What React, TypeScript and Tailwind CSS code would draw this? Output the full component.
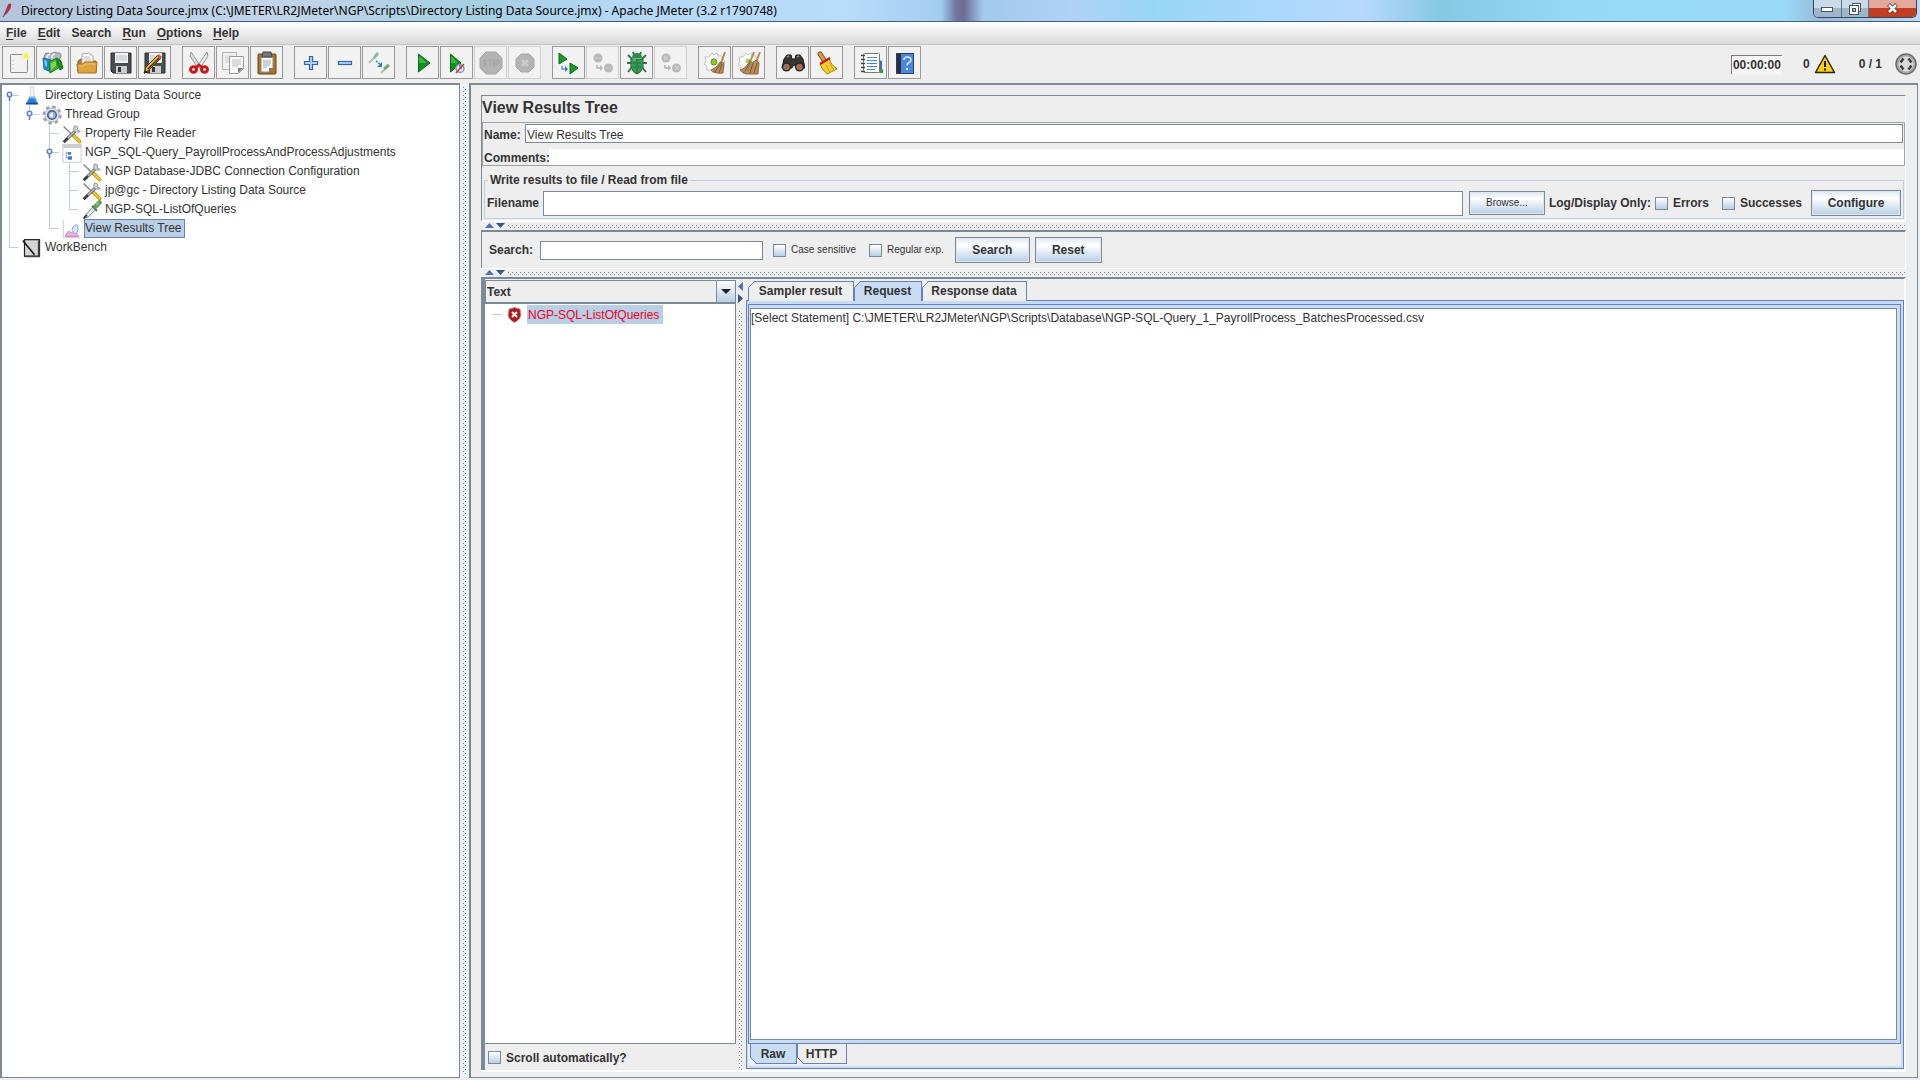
import type { ReactNode } from 'react';

const dotsDark =
  'bg-[conic-gradient(at_1px_1px,transparent_75%,#7a8a99_0),conic-gradient(at_1px_1px,transparent_75%,#7a8a99_0)] bg-[length:4px_4px] bg-[position:0_0,2px_2px]';
const dotsBlue =
  'bg-[conic-gradient(at_1px_1px,transparent_75%,#6382bf_0),conic-gradient(at_1px_1px,transparent_75%,#6382bf_0)] bg-[length:4px_4px] bg-[position:0_0,2px_2px]';

const buttonStyle =
  'border border-[#7a8a99] bg-linear-to-b from-[#dde8f3] via-white via-30% to-[#b8cfe5] outline outline-1 -outline-offset-2 outline-[#dde6ef]';

function Svg({ size = 24, children }: { size?: number; children: ReactNode }) {
  return (
    <svg width={size} height={size} viewBox="0 0 24 24" fill="none" className="shrink-0">
      {children}
    </svg>
  );
}

/* Toolbar icons */

const NewIcon = () => (
  <Svg>
    <rect x="3.500" y="3.500" width="17" height="18" rx="1" fill="#f2f2f2" stroke="#8b8b8b" />
    <path d="M6 9v1M6 13v1M6 17v1" stroke="#aaa" />
    <circle cx="19" cy="5" r="4" fill="#f8f5a8" opacity=".9" />
    <circle cx="19" cy="5" r="2" fill="#f4ee50" />
  </Svg>
);

const TemplatesIcon = () => (
  <Svg>
    <path d="M3 6q1-5 4-4l3 1 3-2 3 1q4-1 4 3l-2 5H4z" fill="#b3bdc0" stroke="#7c868a" />
    <path d="M6 7q0-3 3-4M11 7q0-4 3-4" stroke="#eef1f2" strokeWidth="1.500" />
    <path d="M2 7l8 2v12l-7-3z" fill="#1f86d0" stroke="#1d6aa8" />
    <path d="M3 9l3 1v6l-2-1z" fill="#6fc3f0" />
    <path d="M8 11l8-4 3 3v6l-10 6z" fill="#3fb238" stroke="#1c7a1c" />
    <path d="M16 7l4 3 2 7-3 2-3-6z" fill="#1f8a22" stroke="#1c7a1c" />
    <path d="M10 12l5-2v5l-5 4z" fill="#78d850" />
  </Svg>
);

const OpenIcon = () => (
  <Svg>
    <path d="M3 21V10l3-2h5l2 2h8v11z" fill="#b8792a" stroke="#8a5a1c" />
    <path d="M7 3l7-1 4 3v10H7z" fill="#fafafa" stroke="#aaa" />
    <path d="M9 6h6M9 8h7M9 10h7" stroke="#bdbdbd" />
    <path d="M2 13h6l2-2h12l-1 11H3z" fill="#dda340" stroke="#a8701f" />
    <path d="M4 15h4l2-2h10" stroke="#f5c878" />
  </Svg>
);

const Floppy = () => (
  <>
    <path d="M2 2h20v20H4l-2-2z" fill="#4a4d50" stroke="#2b2d2f" />
    <rect x="6" y="2" width="13" height="10" fill="#f0f3f5" />
    <path d="M7 5h11M7 7h11M7 9h11" stroke="#b7bfc5" />
    <rect x="7" y="15" width="11" height="7" fill="#c9cdd0" />
    <rect x="9" y="16" width="3" height="5" fill="#33363a" />
  </>
);

const SaveIcon = () => <Svg><Floppy /></Svg>;

const SaveAsIcon = () => (
  <Svg>
    <Floppy />
    <path d="M15 4l3 3L6 19l-5 3 2-6z" fill="#f0b32c" stroke="#5a3a10" />
    <path d="M17 6L5 18" stroke="#3a2a18" strokeWidth="1.500" />
    <path d="M14 5l2-2 3 3-2 2z" fill="#c8603a" />
    <path d="M2 19l2 2-3 2z" fill="#222" />
  </Svg>
);

const CutIcon = () => (
  <Svg>
    <path d="M4 1l10 15-3 1L3 5z" fill="#dfe3e6" stroke="#8d9396" />
    <path d="M20 1L10 16l3 1 8-12z" fill="#eef0f1" stroke="#8d9396" />
    <ellipse cx="6.500" cy="18.500" rx="3" ry="2.700" stroke="#cf1515" strokeWidth="3" />
    <ellipse cx="17.500" cy="18.500" rx="3" ry="2.700" stroke="#cf1515" strokeWidth="3" />
    <path d="M9 16l3-2 3 2" stroke="#cf1515" strokeWidth="2.500" />
  </Svg>
);

const CopyIcon = () => (
  <Svg>
    <path d="M1.500 1.500h14v17h-14z" fill="#f1f1f1" stroke="#b0b0b0" />
    <path d="M4 5h8M4 7h8M4 9h4M4 11h4" stroke="#cfcfcf" />
    <path d="M8.500 5.500h14v12l-5 5h-9z" fill="#fafafa" stroke="#9b9b9b" />
    <path d="M11 9h9M11 11h9M11 13h9M11 15h6" stroke="#bcbcbc" />
    <path d="M22 17l-5 5v-5z" fill="#777" />
  </Svg>
);

const PasteIcon = () => (
  <Svg>
    <rect x="3" y="3" width="18" height="20" rx="1" fill="#a87424" stroke="#6d4812" />
    <path d="M6 6h12v11l-4 4H6z" fill="#f8f8f8" stroke="#8c8c8c" />
    <path d="M8 1h8l1 5H7z" fill="#73777a" stroke="#44474a" />
    <path d="M8 10h8M8 12h8M8 14h7M8 16h4" stroke="#aaa" />
    <path d="M18 17l-4 4v-4z" fill="#777" />
  </Svg>
);

const ExpandIcon = () => (
  <Svg>
    <path d="M10.500 5.500h3v5h5v3h-5v5h-3v-5h-5v-3h5z" fill="#b4d2f2" stroke="#2f62b0" strokeWidth="1.200" />
  </Svg>
);

const CollapseIcon = () => (
  <Svg>
    <rect x="5.500" y="10.500" width="13" height="3" fill="#b4d2f2" stroke="#2f62b0" strokeWidth="1.200" />
  </Svg>
);

const ToggleIcon = () => (
  <Svg>
    <path d="M2 12l6-6" stroke="#b5bdb5" strokeWidth="2" />
    <path d="M7 7l4-5" stroke="#8fbb95" strokeWidth="3" />
    <path d="M14 22l5-5" stroke="#b5bdb5" strokeWidth="2" />
    <path d="M17 18l5-4" stroke="#6fa878" strokeWidth="3" />
    <path d="M9 10l5 4" stroke="#2f7de0" strokeWidth="1.500" strokeDasharray="2 1" />
    <path d="M15 11v5h-5z" fill="#2f7de0" />
  </Svg>
);

const StartIcon = () => (
  <Svg>
    <path d="M7.500 3v18L19 12z" fill="#128c1e" stroke="#0b6a14" />
    <path d="M8 5v7h8z" fill="#3fb53f" />
  </Svg>
);

const StartNoTimersIcon = () => (
  <Svg>
    <path d="M5.500 3v18L16 12z" fill="#128c1e" stroke="#0b6a14" />
    <path d="M6 5v7h7z" fill="#3fb53f" />
    <circle cx="15" cy="17.500" r="4" fill="#dfe8f4" stroke="#7d9cc8" strokeWidth="1.500" />
    <path d="M15 17v-3M15 17h2" stroke="#456" />
    <path d="M11 22l8-9" stroke="#d93636" strokeWidth="1.500" />
  </Svg>
);

const StopIcon = () => (
  <Svg>
    <path d="M7 1h10l6 6v10l-6 6H7l-6-6V7z" fill="#b4b4b4" stroke="#a6a6a6" />
    <path d="M4 9h3l-2 3h2l-1 3H4M9 9h4M11 9v6M14 9h2v6h-2zM18 15V9h2v3h-2" stroke="#a0a0a0" />
  </Svg>
);

const ShutdownIcon = () => (
  <Svg>
    <path d="M8 3h8l5 5v8l-5 5H8l-5-5V8z" fill="#b4b4b4" stroke="#a6a6a6" />
    <path d="M9 9l6 6M15 9l-6 6" stroke="#cdcdcd" strokeWidth="2.500" />
  </Svg>
);

const RemoteStartIcon = () => (
  <Svg>
    <path d="M2 2v11l8-5zM13 12v11l8-6z" fill="#1d9a2a" stroke="#0b6a14" />
    <path d="M5 15v3h4" stroke="#5a9ad8" strokeWidth="1.500" />
    <path d="M8 15l3 3-3 3z" fill="#4279b8" />
  </Svg>
);

const RemoteStopIcon = ({ mark }: { mark: string }) => (
  <Svg>
    <circle cx="7" cy="7" r="4.500" fill="#b8b8b8" />
    <circle cx="17.500" cy="17" r="4.500" fill="#b8b8b8" />
    <path d={mark} stroke="#d0d0d0" strokeWidth="1.200" />
    <path d="M6 14v3h4" stroke="#b4b4b4" strokeWidth="1.500" />
    <path d="M9 14l3 3-3 3z" fill="#b4b4b4" />
  </Svg>
);

const BugIcon = () => (
  <Svg>
    <path d="M3 4l4 4M21 4l-4 4M2 12h5M22 12h-5M3 21l4-5M21 21l-4-5M9 4L8 1M15 4l1-3" stroke="#2f7a45" strokeWidth="2" />
    <path d="M7 7q0-5 5-5t5 5z" fill="#2f8a4a" />
    <path d="M6 8h12v8q-2 6-6 7q-4-1-6-7z" fill="#3c9a57" stroke="#23693a" />
    <path d="M12 8v15M8 12h3M8 16h3M13 12h3M13 16h3" stroke="#23693a" />
    <path d="M8 9h3" stroke="#7cc891" />
  </Svg>
);

const gear = 'M9 2l2 2 3-2 1 3 4 0 0 3 3 2-2 3 1 3-3 1-1 4-4-1-3 2-2-3-4 0 0-4-3-2 2-3-1-4 4 0z';

const ClearIcon = () => (
  <Svg>
    <path d={gear} fill="#fbfbfb" stroke="#c4c4c4" />
    <circle cx="11" cy="11" r="3" fill="#8fc832" stroke="#5f9a1c" />
    <path d="M22 1L18 12" stroke="#b98d4b" strokeWidth="2" />
    <path d="M17 11l4 1-1 10q-8 1-12-3q6-2 9-8z" fill="#b68c5a" stroke="#8f6a40" />
    <path d="M18 12l-6 9M19 13l-3 9" stroke="#7d5a34" />
  </Svg>
);

const ClearAllIcon = () => (
  <Svg>
    <path d={gear} fill="#fbfbfb" stroke="#c4c4c4" />
    <circle cx="11" cy="10" r="2.500" fill="#a9cf6a" />
    <path d="M17 1l-4 10M23 1l-4 10" stroke="#b98d4b" strokeWidth="2" />
    <path d="M13 9l2 3 4-3 3 3-1 11H9q-4-1-6-4q7-2 10-10z" fill="#b68c5a" stroke="#8f6a40" />
    <path d="M13 12l-5 8M16 12l-3 10M20 12l-3 10" stroke="#7d5a34" />
  </Svg>
);

const SearchIcon = () => (
  <Svg>
    <path d="M3 8l3-4h4l1 4h3l1-4h4l3 4 2 9h-9l-2-4-2 4H1z" fill="#3a3431" stroke="#1b1817" />
    <path d="M6 6l2-1M16 6l2-1" stroke="#9b958f" strokeWidth="1.500" />
    <circle cx="5.500" cy="16" r="4.500" fill="#2b2523" />
    <circle cx="18.500" cy="16" r="4.500" fill="#2b2523" />
    <circle cx="5.500" cy="16" r="2.800" fill="#b5633a" stroke="#7f8287" />
    <circle cx="18.500" cy="16" r="2.800" fill="#b5633a" stroke="#7f8287" />
  </Svg>
);

const BroomIcon = () => (
  <Svg>
    <path d="M5 3l4 6" stroke="#9a5a1c" strokeWidth="5" strokeLinecap="round" />
    <path d="M5 3l4 6" stroke="#d69a52" strokeWidth="3" strokeLinecap="round" />
    <path d="M14 8q2 6 8 10l-10 5q-5-4-7-10z" fill="#f5cf2b" stroke="#a8820f" />
    <path d="M11 14l4 7M14 12l5 7" stroke="#c79a14" />
    <path d="M5 13l10-6" stroke="#c01c1c" strokeWidth="2.500" />
  </Svg>
);

const FunctionHelperIcon = () => (
  <Svg>
    <path d="M20 9l3 1v10l-3 1z" fill="#3a70c4" />
    <path d="M20 18h4v4h-4z" fill="#2d9c3c" />
    <rect x="4.500" y="2.500" width="16" height="19" rx="1" fill="#fff" stroke="#777" />
    <path d="M8 6.500h10M8 9.500h10M8 12.500h10M8 15.500h10M8 18.500h8" stroke="#3f86d6" strokeWidth="1.200" />
    <path d="M2 4.500h4M2 8.500h4M2 12.500h4M2 16.500h4M2 20.500h4" stroke="#444" strokeWidth="1.500" />
  </Svg>
);

const HelpIcon = () => (
  <Svg>
    <rect x="3.500" y="2.500" width="17" height="20" fill="#4a86dc" stroke="#2b3b66" />
    <rect x="4" y="3" width="4" height="19" fill="#2b2f3c" />
    <path d="M11 9q0-3 3.500-3t3.500 3q0 1.500-2 2.500t-2 3" stroke="#dfeafa" strokeWidth="1.500" />
    <path d="M14 17v2" stroke="#dfeafa" strokeWidth="2" />
  </Svg>
);

/* Tree icons */

const FlaskIcon = () => (
  <Svg size={20}>
    <path d="M10 1h4l1 10 5 11H4l6-11z" fill="#eef4f9" stroke="#c0cad2" strokeWidth=".700" />
    <path d="M9 13h6l4 9H5z" fill="#2f7fd8" />
    <path d="M9 13h6l1 2H8z" fill="#7fbaf0" />
    <path d="M5 21h14" stroke="#0f4f9a" strokeWidth="2" />
  </Svg>
);

const ThreadGroupIcon = () => (
  <Svg size={20}>
    <circle cx="12" cy="12" r="10" stroke="#9aa1a9" strokeWidth="3" strokeDasharray="4.200 3.650" />
    <circle cx="12" cy="12" r="8.500" fill="#e2e5e9" stroke="#a0a6ad" />
    <circle cx="12" cy="12" r="5.200" fill="#9fb3e0" stroke="#4a5c92" strokeWidth="1.800" />
    <path d="M9 12q1-3 4-3v6q-3 0-4-3z" fill="#f3f6fd" />
  </Svg>
);

const ConfigIcon = () => (
  <Svg size={20}>
    <path d="M2 3l12 12" stroke="#8a8f8f" strokeWidth="2" />
    <path d="M14 14l7 7" stroke="#b08a10" strokeWidth="4.500" strokeLinecap="round" />
    <path d="M14 14l7 7" stroke="#eac32e" strokeWidth="3" strokeLinecap="round" />
    <path d="M2 22L16 8" stroke="#3a3d3f" strokeWidth="3.500" />
    <path d="M7 17l9-9" stroke="#b9bdbf" strokeWidth="2" />
    <path d="M15 2q-2 4 0 7 4 2 7 0l-4-2 1-3z" fill="#d3d6d7" stroke="#85898b" />
  </Svg>
);

const ControllerIcon = () => (
  <Svg size={20}>
    <rect x="1" y="2" width="22" height="21" fill="#fdfdfd" stroke="#c5c5c5" />
    <rect x="1" y="1" width="22" height="5" fill="#cfcfcf" />
    <path d="M5 10v9M5 12h4M5 17h4" stroke="#7a9ad0" />
    <rect x="7" y="11" width="4" height="3" fill="#3d74c8" />
    <rect x="7" y="16" width="5" height="4" fill="#3d74c8" />
  </Svg>
);

const SamplerIcon = () => (
  <Svg size={20}>
    <path d="M2 22l3-5L14 8l3 3-9 9z" fill="#e8ecec" stroke="#5c6262" />
    <path d="M2 22l4-4" stroke="#333" strokeWidth="2" />
    <path d="M12 7l6 6" stroke="#4a5a4a" strokeWidth="2" />
    <path d="M16 8l5-5" stroke="#5c9a55" strokeWidth="5.500" strokeLinecap="round" />
    <path d="M17 6l3-3" stroke="#9ed08f" strokeWidth="1.500" />
  </Svg>
);

const ListenerIcon = () => (
  <Svg size={20}>
    <path d="M1.500 1v21.500H22" stroke="#c0c0cc" />
    <path d="M4 21q2-7 5-6 3 3 5-2l6 8z" fill="#f4a8e0" stroke="#d070bc" />
    <path d="M12 14q0-5 4-7t3 6-6 2" fill="#cfe6f8" stroke="#7aa4d8" />
  </Svg>
);

const WorkBenchIcon = () => (
  <Svg size={20}>
    <rect x="3" y="2" width="18" height="20" fill="#d8dadb" stroke="#222" strokeWidth="1.500" />
    <path d="M7 6h11M7 10h11M7 14h11M7 18h11" stroke="#c5c9cb" />
    <path d="M1 3l14 17" stroke="#1a1a1a" strokeWidth="2" />
    <path d="M20 3v19H4" stroke="#444" strokeWidth="2" />
  </Svg>
);

const ShieldIcon = () => (
  <svg width="15" height="16" viewBox="0 0 15 16" fill="none">
    <path d="M2 2l5.500-1.500L13 2l1 6q-1 5-6.500 7.500Q2 13 1 8z" fill="#b5161b" stroke="#a5a5a5" />
    <path d="M5 5l5 5M10 5l-5 5" stroke="#fff" strokeWidth="2" />
  </svg>
);

const toolGroups: { label: string; icon: ReactNode; disabled?: boolean }[][] = [
  [
    { label: 'New', icon: <NewIcon /> },
    { label: 'Templates', icon: <TemplatesIcon /> },
    { label: 'Open', icon: <OpenIcon /> },
    { label: 'Save', icon: <SaveIcon /> },
    { label: 'Save as', icon: <SaveAsIcon /> },
  ],
  [
    { label: 'Cut', icon: <CutIcon /> },
    { label: 'Copy', icon: <CopyIcon /> },
    { label: 'Paste', icon: <PasteIcon /> },
  ],
  [
    { label: 'Expand all', icon: <ExpandIcon /> },
    { label: 'Collapse all', icon: <CollapseIcon /> },
    { label: 'Toggle', icon: <ToggleIcon /> },
  ],
  [
    { label: 'Start', icon: <StartIcon /> },
    { label: 'Start no pauses', icon: <StartNoTimersIcon /> },
    { label: 'Stop', icon: <StopIcon />, disabled: true },
    { label: 'Shutdown', icon: <ShutdownIcon />, disabled: true },
  ],
  [
    { label: 'Remote start all', icon: <RemoteStartIcon /> },
    { label: 'Remote stop all', icon: <RemoteStopIcon mark="M4 7h6M15 17h5" />, disabled: true },
    { label: 'Debug', icon: <BugIcon /> },
    { label: 'Remote shutdown all', icon: <RemoteStopIcon mark="M5 5l4 4M9 5l-4 4M16 15l4 4M20 15l-4 4" />, disabled: true },
  ],
  [
    { label: 'Clear', icon: <ClearIcon /> },
    { label: 'Clear all', icon: <ClearAllIcon /> },
  ],
  [
    { label: 'Search tree', icon: <SearchIcon /> },
    { label: 'Reset search', icon: <BroomIcon /> },
  ],
  [
    { label: 'Function helper', icon: <FunctionHelperIcon /> },
    { label: 'Help contents', icon: <HelpIcon /> },
  ],
];

type Guide = 'none' | 'line' | 'tee' | 'end' | 'root' | 'handleEnd' | 'handleTee';

// SVG paths of the connector drawn in one indent cell
const guidePaths: Record<Guide, string> = {
  none: '',
  line: 'M7.500 0v19',
  tee: 'M7.500 0v19M7.500 9.500h9',
  end: 'M7.500 0v9.500h9',
  root: 'M7.500 10v9M9 9.500h8',
  handleEnd: 'M7.500 0v8M9 9.500h8',
  handleTee: 'M7.500 0v19M9 9.500h8',
};

const treeRows: { label: string; icon: ReactNode; guides: Guide[]; selected?: boolean }[] = [
  { label: 'Directory Listing Data Source', icon: <FlaskIcon />, guides: ['root'] },
  { label: 'Thread Group', icon: <ThreadGroupIcon />, guides: ['line', 'handleEnd'] },
  { label: 'Property File Reader', icon: <ConfigIcon />, guides: ['line', 'none', 'tee'] },
  { label: 'NGP_SQL-Query_PayrollProcessAndProcessAdjustments', icon: <ControllerIcon />, guides: ['line', 'none', 'handleTee'] },
  { label: 'NGP Database-JDBC Connection Configuration', icon: <ConfigIcon />, guides: ['line', 'none', 'line', 'tee'] },
  { label: 'jp@gc - Directory Listing Data Source', icon: <ConfigIcon />, guides: ['line', 'none', 'line', 'tee'] },
  { label: 'NGP-SQL-ListOfQueries', icon: <SamplerIcon />, guides: ['line', 'none', 'line', 'end'] },
  { label: 'View Results Tree', icon: <ListenerIcon />, guides: ['line', 'none', 'end'], selected: true },
  { label: 'WorkBench', icon: <WorkBenchIcon />, guides: ['end'] },
];

function GuideCell({ kind }: { kind: Guide }) {
  const handle = kind === 'root' || kind === 'handleEnd' || kind === 'handleTee';
  return (
    <svg width="20" height="19" className="shrink-0" fill="none">
      <path d={guidePaths[kind]} stroke="#b8cfe5" />
      {handle && (
        <>
          <circle cx="7.500" cy="8.500" r="2.200" fill="#fff" stroke="#6382bf" strokeWidth="1.600" />
          <path d="M7.500 11v4" stroke="#6382bf" strokeWidth="1.600" />
        </>
      )}
    </svg>
  );
}

const menus = [
  { key: 'F', rest: 'ile' },
  { key: 'E', rest: 'dit' },
  { key: '', rest: 'Search' },
  { key: 'R', rest: 'un' },
  { key: 'O', rest: 'ptions' },
  { key: 'H', rest: 'elp' },
];

function Check({ label, small }: { label: string; small?: boolean }) {
  return (
    <label className={`flex items-center gap-[5px] ${small ? 'text-[10px] font-normal' : ''}`}>
      <input
        type="checkbox"
        className="size-[13px] appearance-none border border-[#7a8a99] bg-linear-to-b from-white to-[#b8cfe5]"
      />
      {label}
    </label>
  );
}

function Splitter() {
  return (
    <div className="flex h-[9px] items-start gap-[3px] border-t border-white pt-px pl-1">
      <svg width="20" height="5" className="shrink-0">
        <path d="M0 5L4.500 0 9 5z" fill="#4f6fae" />
        <path d="M11 0h9l-4.500 5z" fill="#36558f" />
      </svg>
      <div className={`mt-0.5 h-[3px] flex-1 ${dotsDark}`} />
    </div>
  );
}

function Tab({ label, active, bottom, className }: { label: string; active?: boolean; bottom?: boolean; className: string }) {
  return (
    <button
      className={`relative h-5 border-r border-[#6382bf] font-bold ${bottom ? 'border-b' : 'border-t pb-0.5'} ${
        active ? 'bg-[#c8ddf2]' : 'bg-[#eee]'
      } ${className}`}
    >
      {label}
      <svg
        width="7"
        height="20"
        fill="none"
        className={`absolute left-0 ${bottom ? '-bottom-px -scale-y-100' : '-top-px'}`}
      >
        <path d="M0 0h6L0 6z" fill="#eee" />
        <path d="M7 0.500H6.500L0.500 6.500V20" stroke="#6382bf" />
      </svg>
    </button>
  );
}

function TitleBar() {
  return (
    <header className="flex h-[22px] items-start border-b border-[#3f5f86] bg-[linear-gradient(90deg,#b3c5dc_0%,#c3d5e8_14%,#a5cfe2_25%,#b4d7f4_32%,#b9dcfb_44%,#a3cdf0_49%,#7474a0_49.800%,#6c6c96_50.200%,#a2caed_51.200%,#b0d1f8_56%,#98d5f4_60%,#a3d8fb_64%,#b7d9fe_71%,#86c8e4_75%,#97d8f8_82%,#9ad8f8_93%,#9ab8d6_95%,#bfdaf2_100%)] pr-[3px]">
      <svg width="15" height="21" fill="none" className="ml-px shrink-0">
        <path d="M3 15L6 8Q7 3 10 4Q10 9 6 13z" fill="#d2243a" stroke="#8f1d3a" strokeWidth=".500" />
        <path d="M2 17l4-6" stroke="#5a3a7a" />
      </svg>
      <h1 className="ml-[5px] flex-1 font-['Noto_Sans',sans-serif] text-[12px] leading-[21px] font-normal text-black">
        Directory Listing Data Source.jmx (C:\JMETER\LR2JMeter\NGP\Scripts\Directory Listing Data Source.jmx) - Apache JMeter (3.2 r1790748)
      </h1>
      <div className="flex h-[18px] overflow-hidden rounded-b-[5px] border border-t-0 border-[#33475c]">
        <button aria-label="Minimize" className="flex w-7 items-center justify-center border-r border-[#5c7086] bg-linear-to-b from-[#c9dbe9] from-50% to-[#9fb6ca] to-50%">
          <svg width="13" height="6"><rect x=".500" y="1.500" width="11" height="4" fill="#fff" stroke="#4a5666" /></svg>
        </button>
        <button aria-label="Restore" className="flex w-[27px] items-center justify-center border-r border-[#5c7086] bg-linear-to-b from-[#c9dbe9] from-50% to-[#9fb6ca] to-50%">
          <svg width="12" height="12" fill="none">
            <rect x="3.500" y=".500" width="8" height="8" fill="#fff" stroke="#4a5666" />
            <rect x=".500" y="2.500" width="9" height="9" fill="#fff" stroke="#4a5666" />
            <rect x="3.500" y="5.500" width="3" height="3" fill="#9bb" stroke="#4a5666" />
          </svg>
        </button>
        <button aria-label="Close" className="flex w-[47px] items-center justify-center bg-linear-to-b from-[#e3a99c] from-45% to-[#c23d22] to-50%">
          <svg width="13" height="11" fill="none">
            <path d="M2.500 1.500l8 8M10.500 1.500l-8 8" stroke="#5b3a3a" strokeWidth="4" />
            <path d="M3 2l7 7M10 2l-7 7" stroke="#fff" strokeWidth="2.500" />
          </svg>
        </button>
      </div>
    </header>
  );
}

function Toolbar() {
  return (
    <div className="flex h-[38px] items-start pt-px pl-[2px]">
      <div className="flex gap-[11px]">
        {toolGroups.map((group, i) => (
          <div key={i} className="flex gap-px">
            {group.map((tool) => (
              <button
                key={tool.label}
                aria-label={tool.label}
                disabled={tool.disabled}
                className={`flex size-[33px] items-center justify-center border bg-[#f2f2f2] ${
                  tool.disabled ? 'border-[#d0d0d0]' : 'border-[#999]'
                }`}
              >
                {tool.icon}
              </button>
            ))}
          </div>
        ))}
      </div>
      <div className="ml-auto flex h-9 items-center pr-[3px] font-bold">
        <span className="h-[19px] border-t border-l border-[#7a7a7a] bg-[#f6f6f6] px-px leading-[18px]">00:00:00</span>
        <span className="ml-[21px]">0</span>
        <svg width="22" height="20" viewBox="0 0 22 20" fill="none" className="ml-1">
          <path d="M11 1.500L20.500 18.500H1.500z" fill="#f7cf14" stroke="#2a2608" strokeWidth="1.500" strokeLinejoin="round" />
          <path d="M11 7v6M11 14.500v2" stroke="#1a1a1a" strokeWidth="2" />
        </svg>
        <span className="ml-[23px]">0 / 1</span>
        <svg width="22" height="22" viewBox="0 0 22 22" fill="none" className="ml-[13px]">
          <circle cx="11" cy="11" r="10" fill="#a9a9a9" stroke="#6b6b6b" strokeWidth="1.500" />
          <circle cx="11" cy="11" r="7.500" fill="#dadada" />
          <path d="M5.500 9.500l3-4M13.500 5.500l3 4M5.500 12.500l3 4M13.500 16.500l3-4" stroke="#3c3c3c" strokeWidth="2.500" />
        </svg>
      </div>
    </div>
  );
}

function TestPlanTree() {
  return (
    <aside className="w-[460px] shrink-0 border-t-2 border-l-2 border-[#7a8a99] bg-white">
      <ul className="h-full border-r border-b border-[#7a8a99] pt-px">
        {treeRows.map((row) => (
          <li key={row.label} className="flex h-[19px] items-center">
            {row.guides.map((kind, i) => (
              <GuideCell key={i} kind={kind} />
            ))}
            {row.icon}
            <span
              className={`ml-0.5 border pr-0.5 leading-[17px] whitespace-nowrap ${
                row.selected ? 'border-[#6382bf] bg-[#b8cfe5]' : 'border-transparent'
              }`}
            >
              {row.label}
            </span>
          </li>
        ))}
      </ul>
    </aside>
  );
}

function FilePanel() {
  return (
    <div className="border border-[#7a8a99] border-r-white border-b-white pb-px">
      <h2 className="h-[26px] text-[16px] leading-[23px] font-bold">View Results Tree</h2>
      <div className="flex flex-col gap-1.5 border border-[#a0a0a0] pt-px pl-px">
        <div className="flex items-center pr-px">
          <label htmlFor="name" className="w-[41px] pt-0.5 font-bold">Name:</label>
          <input id="name" defaultValue="View Results Tree" className="h-[19px] min-w-0 flex-1 border border-[#7a8a99] bg-white px-px pt-0.5" />
        </div>
        <div className="flex items-center">
          <label htmlFor="comments" className="h-4 w-[65px] leading-[18px] font-bold">Comments:</label>
          <input id="comments" className="h-4 min-w-0 flex-1 bg-white" />
        </div>
      </div>
      <fieldset className="mt-1.5 mr-px ml-0.5 border border-[#b8cfe5] px-0.5 pt-0.5 pb-0.5 font-bold">
        <legend className="ml-px px-0.5 leading-4">Write results to file / Read from file</legend>
        <div className="flex items-center">
          <label htmlFor="filename" className="w-14">Filename</label>
          <input id="filename" className="h-[25px] min-w-0 flex-1 border border-[#7a8a99] bg-white px-px font-normal" />
          <button className={`ml-1.5 h-6 w-[76px] text-[10px] font-normal ${buttonStyle}`}>Browse...</button>
          <span className="mx-1">Log/Display Only:</span>
          <Check label="Errors" />
          <span className="w-[13px]" />
          <Check label="Successes" />
          <button className={`ml-[9px] h-[26px] w-[90px] ${buttonStyle}`}>Configure</button>
        </div>
      </fieldset>
    </div>
  );
}

function SearchPanel() {
  return (
    <div className="flex h-[38px] items-center border-t-2 border-r border-l border-[#7a8a99] border-r-white pl-[7px] font-bold">
      <label htmlFor="search" className="w-[51px]">Search:</label>
      <input id="search" className="mr-2.5 h-[19px] w-[223px] border border-[#7a8a99] bg-white px-px font-normal" />
      <Check label="Case sensitive" small />
      <span className="w-[13px]" />
      <Check label="Regular exp." small />
      <button className={`ml-[11px] h-[26px] w-[75px] ${buttonStyle}`}>Search</button>
      <button className={`ml-[5px] h-[26px] w-[67px] ${buttonStyle}`}>Reset</button>
    </div>
  );
}

function ResultList() {
  return (
    <div className="flex w-[255px] shrink-0 flex-col border-l-4 border-[#7a8a99] pt-px">
      <div className="relative">
        <select aria-label="Renderer" className="block h-6 w-[251px] appearance-none border border-b-2 border-[#7a8a99] bg-[#eee] px-px font-bold">
          <option>Text</option>
        </select>
        <span className="pointer-events-none absolute top-px right-px flex h-[21px] w-[19px] items-center justify-center border-l border-[#7a8a99] bg-linear-to-b from-white to-[#b8cfe5]">
          <svg width="10" height="5"><path d="M0 0h10L5 5z" fill="#222" /></svg>
        </span>
      </div>
      <ul className="flex-1 border-r border-b border-[#7a8a99] bg-white pt-px">
        <li className="flex h-[19px] items-center">
          <span className="ml-[7px] h-px w-2.5 bg-[#b8cfe5]" />
          <span className="mx-[5px]"><ShieldIcon /></span>
          <span className="h-[19px] bg-[#b8cfe5] pr-1 pl-px leading-[20px] text-[#f00020]">NGP-SQL-ListOfQueries</span>
        </li>
      </ul>
      <div className="flex h-[26px] items-center pt-px pl-[3px] font-bold">
        <Check label="Scroll automatically?" />
      </div>
    </div>
  );
}

function ResultTabs() {
  return (
    <div className="flex min-w-0 flex-1 flex-col pt-0.5 pb-px">
      <div className="-mb-px flex pl-0.5">
        <Tab label="Sampler result" className="w-[106px]" />
        <Tab label="Request" active className="w-[68px]" />
        <Tab label="Response data" className="w-[105px]" />
      </div>
      <div className="flex flex-1 flex-col border border-[#6382bf] bg-[#c8ddf2] pt-[3px] pr-0.5 pb-0.5 pl-px">
        <div className="flex flex-1 border border-[#6382bf] pt-[3px] pr-[3px] pb-[3px] pl-px">
          <textarea
            aria-label="Request data"
            readOnly
            className="block flex-1 resize-none border border-[#7a8a99] bg-white leading-[18px]"
            defaultValue="[Select Statement] C:\JMETER\LR2JMeter\NGP\Scripts\Database\NGP-SQL-Query_1_PayrollProcess_BatchesProcessed.csv"
          />
        </div>
        <div className="flex h-[22px] bg-[#eee] pl-0.5">
          <Tab label="Raw" active bottom className="w-[47px]" />
          <Tab label="HTTP" bottom className="w-[50px]" />
        </div>
      </div>
    </div>
  );
}

export default function App() {
  return (
    <div className="flex h-screen flex-col overflow-hidden bg-[#eee] font-['Liberation_Sans',Arial,sans-serif] text-[12px] leading-4 text-[#333]">
      <TitleBar />
      <nav className="flex h-[23px] items-center gap-[11px] border-b border-[#c4c4c4] bg-linear-to-b from-white to-[#dadada] pl-1.5 font-bold">
        {menus.map((menu) => (
          <button key={menu.rest}>
            <span className="underline underline-offset-2">{menu.key}</span>
            {menu.rest}
          </button>
        ))}
      </nav>
      <Toolbar />

      <div className="flex min-h-0 flex-1 pb-0.5">
        <TestPlanTree />
        <div className="flex w-[9px] justify-center bg-[#f0f3f8] py-1">
          <div className={`w-[3px] ${dotsBlue}`} />
        </div>
        <main className="mr-0.5 flex min-w-0 flex-1 flex-col border-t-2 border-r border-b border-l-2 border-[#7a8a99] pt-2.5 pr-[11px] pb-[5px] pl-2.5">
          <FilePanel />
          <Splitter />
          <SearchPanel />
          <Splitter />
          <div className="flex min-h-0 flex-1 border-t-2 border-r-2 border-b-2 border-[#7a8a99] border-r-white border-b-white">
            <ResultList />
            <div className="flex w-2.5 shrink-0 flex-col items-center gap-[7px] pt-[3px] pr-0.5">
              <svg width="5" height="22" className="shrink-0">
                <path d="M5 0v9L0 4.500z" fill="#4f6fae" />
                <path d="M0 12v9l5-4.500z" fill="#36558f" />
              </svg>
              <div className={`w-[3px] flex-1 ${dotsDark}`} />
            </div>
            <ResultTabs />
          </div>
        </main>
      </div>
    </div>
  );
}
